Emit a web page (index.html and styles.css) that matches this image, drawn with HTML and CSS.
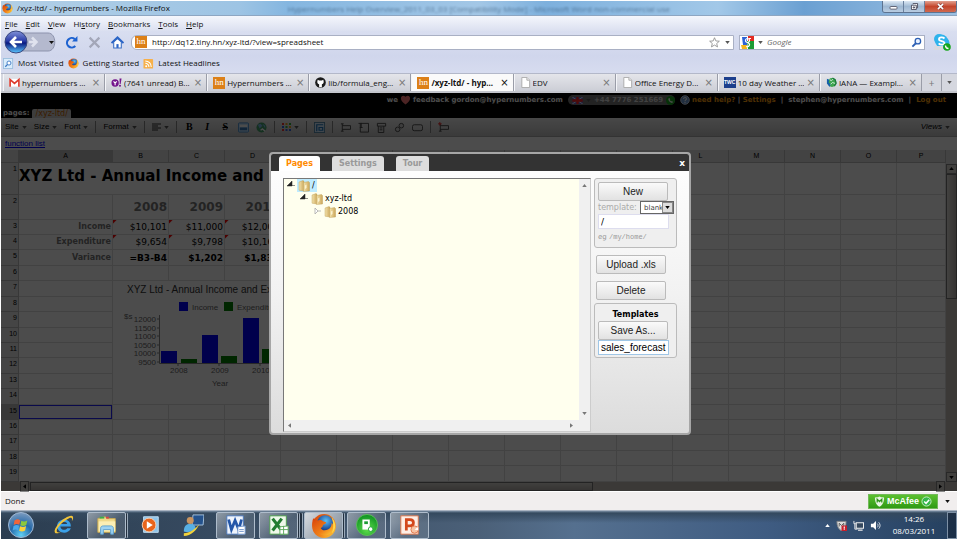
FILE: index.html
```html
<!DOCTYPE html>
<html lang="en">
<head>
<meta charset="utf-8">
<title>/xyz-ltd/ - hypernumbers</title>
<link rel="stylesheet" href="styles.css">
</head>
<body>
<svg class="defs" aria-hidden="true">
  <defs>
    <linearGradient id="gFolder" x1="0" x2="1"><stop offset="0" stop-color="#f3e3ae"/><stop offset="1" stop-color="#cda85a"/></linearGradient>
    <radialGradient id="gFox" cx=".55" cy=".35" r=".6"><stop offset="0" stop-color="#5cc0f5"/><stop offset="1" stop-color="#123a8c"/></radialGradient>
    <linearGradient id="gFlame" x1="0" y1="0" x2="1" y2="1"><stop offset="0" stop-color="#d8420a"/><stop offset=".6" stop-color="#f08018"/><stop offset="1" stop-color="#ffd23c"/></linearGradient>
    <radialGradient id="gOrb" cx=".5" cy=".9" r=".9"><stop offset="0" stop-color="#5fd0f5"/><stop offset=".5" stop-color="#2468a8"/><stop offset="1" stop-color="#7d9cc0"/></radialGradient>
    <radialGradient id="gGreen" cx=".5" cy=".7" r=".7"><stop offset="0" stop-color="#5fe04c"/><stop offset="1" stop-color="#0c8f22"/></radialGradient>
    <linearGradient id="gBack" x1="0" y1="0" x2="0" y2="1"><stop offset="0" stop-color="#8292d8"/><stop offset=".45" stop-color="#2a3ca8"/><stop offset=".55" stop-color="#0a1a80"/><stop offset="1" stop-color="#5cc8ff"/></linearGradient>
  </defs>
  <symbol id="firefox" viewBox="0 0 24 24">
    <circle cx="12" cy="12" r="11" fill="url(#gFlame)"/>
    <circle cx="13" cy="9.500" r="7.500" fill="url(#gFox)"/>
    <path d="M2 5c2 0 3 1 4 2 2-1 4-.5 5 .5l3 1c0 1.500-2 2-3 2.500 0 2-1 2-2 3 1 2 4 2.500 7 1 2-1 3-3 3-6 2 2 3 5 1 8-3 4-9 5-13 2C2 16 0 10 2 5z" fill="url(#gFlame)"/>
    <path d="M19 4c4 4 5 11 0 15 2-4 2-10 0-15z" fill="#ffd84a"/>
  </symbol>
  <symbol id="folder" viewBox="0 0 12 12">
    <path d="M1 2l4-1.500 1 .8V11l-5-.8z" fill="url(#gFolder)" stroke="#b9984e" stroke-width=".4"/>
    <path d="M5.500 2.500l5-1 1 1v8.500l-6 .5z" fill="url(#gFolder)" stroke="#b9984e" stroke-width=".4"/>
    <path d="M7 9V5.500l1.500-1V8z" fill="#fbf3d2"/>
  </symbol>
  <symbol id="sheet" viewBox="0 0 12 12"><path d="M2 .5h5.500l3 3v8H2z" fill="#fff" stroke="#a9a9a9"/><path d="M7.500.5v3h3" fill="#eee" stroke="#a9a9a9"/></symbol>
  <symbol id="down" viewBox="0 0 6 4"><path d="M0 0h6L3 4z"/></symbol>
  <symbol id="phone" viewBox="0 0 10 10"><circle cx="5" cy="5" r="5" fill="#17a51b"/><path d="M2.500 3l1.300-.8.9 1.500-.6.700 1.600 1.600.700-.5 1.300.9L7 7.800C4.500 7.500 2.500 5.300 2.500 3z" fill="#fff"/></symbol>
</svg>

<header class="chrome">
  <div class="titlebar">
    <svg class="i11"><use href="#firefox"/></svg>
    <span class="win-title">/xyz-ltd/ - hypernumbers - Mozilla Firefox</span>
    <span class="ghost">Hypernumbers Help Overview_2011_03_03 [Compatibility Mode] - Microsoft Word non-commercial use</span>
    <div class="winbtns">
      <button type="button" class="wb" aria-label="Minimise"><svg viewBox="0 0 10 8"><rect x="1" y="4" width="8" height="3" rx="1" fill="#fff" stroke="#556"/></svg></button>
      <button type="button" class="wb" aria-label="Restore"><svg viewBox="0 0 10 8"><path d="M3 .5h5.500v5H7M1.500 2.500H7v5H1.500zM3.500 4.500h1.500v1.200H3.500z" fill="#fff" stroke="#445"/></svg></button>
      <button type="button" class="wb wb-close" aria-label="Close window"><svg viewBox="0 0 10 8"><path d="M2 1l6 6M8 1L2 7" stroke="#733" stroke-width="3"/><path d="M2 1l6 6M8 1L2 7" stroke="#fff" stroke-width="1.800"/></svg></button>
    </div>
  </div>
  <nav class="menubar">
    <a href="#"><u>F</u>ile</a><a href="#"><u>E</u>dit</a><a href="#"><u>V</u>iew</a><a href="#">Hi<u>s</u>tory</a><a href="#"><u>B</u>ookmarks</a><a href="#"><u>T</u>ools</a><a href="#"><u>H</u>elp</a>
  </nav>
  <div class="navbar">
    <svg class="backfwd" viewBox="0 0 54 24" role="img" aria-label="Back and forward">
      <path d="M14 3h30c9 0 9 18 0 18H14z" fill="#b4b9ce" stroke="#8d93ad"/>
      <path d="M28 7.500l4.500 4.500-4.500 4.500M25 12h7" fill="none" stroke="#dfe2ee" stroke-width="2.500"/>
      <path d="M45 11h5l-2.500 3z" fill="#111"/>
      <circle cx="12" cy="12" r="11" fill="url(#gBack)" stroke="#37457f"/>
      <path d="M12 7l-5 5 5 5M7.500 12H18" fill="none" stroke="#fff" stroke-width="2.600"/>
    </svg>
    <button type="button" class="nb" aria-label="Reload"><svg viewBox="0 0 12 12"><path d="M9.500 9.200A4.400 4.400 0 1 1 9 2.800" fill="none" stroke="#1d62d0" stroke-width="2"/><path d="M6.500 5h5V0z" fill="#1d62d0"/></svg></button>
    <button type="button" class="nb" aria-label="Stop"><svg viewBox="0 0 12 12"><path d="M1.500 1.500l9 9M10.500 1.500l-9 9" stroke="#a3a7b8" stroke-width="2"/></svg></button>
    <button type="button" class="nb" aria-label="Home"><svg viewBox="0 0 12 12"><path d="M2.500 5.500V11h7V5.500L6 2.500z" fill="#fff" stroke="#3b6fc4"/><path d="M.5 6.500L6 1.200l5.500 5.300" fill="none" stroke="#2b65c6" stroke-width="1.600"/><path d="M5 7.500h2V11H5z" fill="#2b65c6"/></svg></button>
    <div class="urlbox">
      <span class="hn">hn</span>
      <input class="url" aria-label="Address" value="http://dq12.tiny.hn/xyz-ltd/?view=spreadsheet">
      <svg class="i11" viewBox="0 0 12 12"><path d="M6 .8l1.500 3.500 3.800.3-2.900 2.500.9 3.700L6 8.800l-3.300 2 .9-3.700L.7 4.600l3.800-.3z" fill="#fff" stroke="#8a8a8a" stroke-width=".9"/></svg>
      <svg class="dd"><use href="#down"/></svg>
    </div>
    <div class="searchbox">
      <svg class="i13" viewBox="0 0 13 13"><rect width="13" height="13" fill="#fff"/><path d="M7 0h6v5H7z" fill="#e22b22"/><path d="M6 5h7v8H7z" fill="#1c9a34"/><path d="M0 9h6v4H1z" fill="#f4b51c"/><path d="M1 1h5v8H2z" fill="#2b62d4"/><circle cx="6.500" cy="4.500" r="2" stroke="#fff" stroke-width="1.200" fill="none"/><path d="M8 2.500h2M7 6.500c3 2 1 5-2 4" stroke="#fff" stroke-width="1.200" fill="none"/></svg>
      <svg class="dd"><use href="#down"/></svg>
      <input class="search" aria-label="Search" placeholder="Google">
      <svg class="i11" viewBox="0 0 12 12"><circle cx="7.500" cy="4.500" r="3" fill="#e8f1ff" stroke="#2c5fb4" stroke-width="1.400"/><path d="M5.300 6.800L1.500 10.600" stroke="#2c5fb4" stroke-width="2"/></svg>
    </div>
    <svg class="skype" viewBox="0 0 18 18"><circle cx="6" cy="6" r="5" fill="#2fb3ec"/><circle cx="11" cy="10" r="5.500" fill="#2fb3ec"/><circle cx="8.500" cy="8" r="6.500" fill="#2fb3ec"/><path d="M11.500 5.500c-1.500-1.500-5.500-1.500-5.500.7 0 2.400 5.500 1.300 5.500 3.800 0 2.200-4.500 2-5.800.4" fill="none" stroke="#fff" stroke-width="1.800"/><path d="M1 13h9v4H1z" fill="#d7d9df"/><circle cx="14" cy="14" r="3.800" fill="#17a51b"/><path d="M12.500 12.500c0 2 1 3 3 3" fill="none" stroke="#fff" stroke-width="1.300"/></svg>
  </div>
  <div class="bookmarks">
    <svg class="i11" viewBox="0 0 12 12"><rect x=".5" y=".5" width="10" height="11" fill="#d9ecfb" stroke="#9cc0df"/><circle cx="6.500" cy="5.500" r="2.200" fill="#fff" stroke="#3b77c4"/><path d="M5 7l-2.500 2.500" stroke="#3b77c4" stroke-width="1.400"/></svg><a href="#">Most Visited</a>
    <svg class="i11"><use href="#firefox"/></svg><a href="#">Getting Started</a>
    <svg class="i11" viewBox="0 0 12 12"><rect x=".5" y="1" width="10.500" height="10.500" rx="1" fill="#f7b04a"/><circle cx="3.500" cy="9" r="1.100" fill="#fff"/><path d="M2.500 5.800a4 4 0 0 1 4 4M2.500 3.200a6.500 6.500 0 0 1 6.500 6.600" fill="none" stroke="#fff" stroke-width="1.200"/></svg><a href="#">Latest Headlines</a>
  </div>
  <div class="tabs">
    <div class="tab"><svg class="i11" viewBox="0 0 12 12"><rect x=".5" y="2" width="11" height="8.500" fill="#fff"/><path d="M1.200 10.500V2.800L6 7l4.800-4.200v7.700" fill="none" stroke="#dd3a2c" stroke-width="1.800"/></svg><a href="#">hypernumbers …</a><button type="button" aria-label="Close tab">×</button></div>
    <div class="tab"><svg class="i11" viewBox="0 0 12 12"><circle cx="4.500" cy="6.500" r="4" fill="#74148c"/><path d="M2.800 4.700l1.700 2 1.700-2M4.500 6.500v2.500" fill="none" stroke="#fff" stroke-width="1.200"/><path d="M9.300 1.500h2.200l-1 6h-1z" fill="#74148c"/><circle cx="9.800" cy="9.500" r="1.100" fill="#74148c"/></svg><a href="#">(7641 unread) B...</a><button type="button" aria-label="Close tab">×</button></div>
    <div class="tab"><span class="hn">hn</span><a href="#">Hypernumbers …</a><button type="button" aria-label="Close tab">×</button></div>
    <div class="tab"><svg class="i11" viewBox="0 0 12 12"><circle cx="6" cy="6" r="5.800" fill="#1b1b1b"/><path d="M3 3l1.500.8h3L9 3c1 2.500.5 4.500-1.500 4.800v3.400h-3V7.800C2.500 7.500 2 5.500 3 3z" fill="#fff"/></svg><a href="#">lib/formula_eng…</a><button type="button" aria-label="Close tab">×</button></div>
    <div class="tab active"><span class="hn">hn</span><a href="#">/xyz-ltd/ - hyp...</a><button type="button" aria-label="Close tab">×</button></div>
    <div class="tab"><svg class="i11"><use href="#sheet"/></svg><a href="#">EDV</a><button type="button" aria-label="Close tab">×</button></div>
    <div class="tab"><svg class="i11"><use href="#sheet"/></svg><a href="#">Office Energy D...</a><button type="button" aria-label="Close tab">×</button></div>
    <div class="tab"><span class="twc">TWC</span><a href="#">10 day Weather …</a><button type="button" aria-label="Close tab">×</button></div>
    <div class="tab"><svg class="i11" viewBox="0 0 12 12"><circle cx="6.500" cy="6" r="4.800" fill="#3fa650"/><path d="M1 2l2.500 1L3 6l2 2-1 3-3-4z" fill="#1560a8"/><path d="M4 3l2 1 2-2M5 8l2-2 3 1" stroke="#d5f0e0" fill="none"/><path d="M7 1l3 2 1 4-2 3" stroke="#1c7a3c" fill="none" stroke-width="1.400"/></svg><a href="#">IANA — Exampl…</a><button type="button" aria-label="Close tab">×</button></div>
    <button type="button" class="newtab" aria-label="New tab">+</button>
    <button type="button" class="alltabs" aria-label="List all tabs"><svg class="dd"><use href="#down"/></svg></button>
  </div>
</header>

<main class="page">
  <div class="sitebar">
    <div class="account">
      <span class="fb">we <svg class="heart" viewBox="0 0 12 11"><path d="M6 10.500C-3 4.500 2-2 6 2c4-4 9 2.500 0 8.500z" fill="#ff7a7a"/></svg> feedback gordon@hypernumbers.com</span>
      <span class="pill"><svg class="flag" viewBox="0 0 12 8"><path d="M0 0h12v8H0z" fill="#5a6ad0"/><path d="M0 0l12 8M12 0L0 8" stroke="#fff"/><path d="M6 0v8M0 4h12" stroke="#f22" stroke-width="2.600"/></svg><svg class="dd"><use href="#down"/></svg> +44 7776 251669 <svg class="i9"><use href="#phone"/></svg></span>
      <svg class="help" viewBox="0 0 12 12"><circle cx="6" cy="6" r="5.200" fill="#6d9ad4" stroke="#dfe8f5"/><path d="M4.300 4.800c0-2.400 3.600-2.200 3.400-.1C7.600 6 6 5.800 6 7.500M6 8.300v1.300" fill="none" stroke="#fff" stroke-width="1.300"/></svg>
      <span><a href="#">need help?</a> | <a href="#">Settings</a></span><span>|</span><span>stephen@hypernumbers.com</span><span>|</span><a href="#">Log out</a>
    </div>
    <div class="pagetabs">pages: <a href="#">/xyz-ltd/</a></div>
  </div>

  <div class="toolbar">
    <button type="button">Site <svg class="dd"><use href="#down"/></svg></button>
    <button type="button">Size <svg class="dd"><use href="#down"/></svg></button>
    <button type="button">Font <svg class="dd"><use href="#down"/></svg></button>
    <i class="sep"></i>
    <button type="button">Format <svg class="dd"><use href="#down"/></svg></button>
    <i class="sep"></i>
    <button type="button" aria-label="Align"><svg class="i9" viewBox="0 0 9 9"><path d="M0 1h9M0 3h6M0 5h9M0 7h6" stroke="#333"/></svg> <svg class="dd"><use href="#down"/></svg></button>
    <i class="sep"></i>
    <button type="button" class="fmt b">B</button>
    <button type="button" class="fmt it">I</button>
    <button type="button" class="fmt st">S</button>
    <button type="button" aria-label="Image"><svg class="i11" viewBox="0 0 12 12"><rect x=".5" y="1" width="11" height="10" rx="1" fill="#bfe0ff" stroke="#4a8fd0"/><path d="M2 3h8v2.500H2z" fill="#fff"/><path d="M2 6h8v3H2z" fill="#3a7ab8"/></svg></button>
    <button type="button" aria-label="Link"><svg class="i11" viewBox="0 0 12 12"><circle cx="6" cy="6" r="5.500" fill="#44a06a"/><path d="M2 3l3-1 2 2-3 3zM7 2l3 2v3z" fill="#7fb8ea"/><path d="M5 9l2-1.500 3 2.500" stroke="#fff" stroke-width="1.500" fill="none"/></svg></button>
    <i class="sep"></i>
    <button type="button" aria-label="Colours"><svg class="i9" viewBox="0 0 9 9"><path d="M0 1h2M0 7h2" stroke="#e33" stroke-width="2"/><path d="M3.500 1h2M7 4h2" stroke="#e9a21c" stroke-width="2"/><path d="M7 1h2M3.500 4h2" stroke="#2cae3c" stroke-width="2"/><path d="M0 4h2M3.500 7h2M7 7h2" stroke="#36d" stroke-width="2"/></svg> <svg class="dd"><use href="#down"/></svg></button>
    <i class="sep"></i>
    <button type="button" aria-label="Merge"><svg class="i11" viewBox="0 0 12 12"><rect x=".5" y=".5" width="11" height="11" fill="#d5ecff" stroke="#58a"/><path d="M3 10V3h7M5.500 6h4v3h-4z" fill="none" stroke="#27b" stroke-width="1.300"/></svg></button>
    <i class="sep"></i>
    <button type="button" aria-label="Text field"><svg class="i11" viewBox="0 0 12 12"><path d="M1 2h3M2.500 2v8M1 10h3M2.500 4h9v4h-9" fill="none" stroke="#444"/></svg></button>
    <button type="button" aria-label="Text area"><svg class="i11" viewBox="0 0 12 12"><path d="M.5 1.500h11v9.500h-9V1.500M3.500 1v5M2 6h3" fill="none" stroke="#444"/></svg></button>
    <button type="button" aria-label="List"><svg class="i11" viewBox="0 0 12 12"><path d="M1.500 1.500h9v3h-9zM2.500 4.500v7h6v-7M4 6.500h3M4 8.500h3" fill="none" stroke="#444"/></svg></button>
    <button type="button" aria-label="Radio"><svg class="i11" viewBox="0 0 12 12"><circle cx="8" cy="4" r="2.500" fill="#ccc" stroke="#444"/><circle cx="4" cy="8" r="2.500" fill="#ccc" stroke="#444"/></svg></button>
    <button type="button" aria-label="Button"><svg class="i11" viewBox="0 0 12 12"><rect x=".5" y="3" width="11" height="6.500" rx="2" fill="none" stroke="#444"/></svg></button>
    <i class="sep"></i>
    <button type="button" aria-label="Required field"><svg class="i11" viewBox="0 0 12 12"><path d="M2.500 2v8M1 10h3M2.500 4h9v4h-9" fill="none" stroke="#444"/><path d="M0 2h4M2 0v4" stroke="#e22"/></svg></button>
    <button type="button" class="views">Views <svg class="dd"><use href="#down"/></svg></button>
  </div>
  <div class="formula"><a href="#">function list</a></div>

  <div class="sheet">
    <table>
      <colgroup><col class="c0"><col class="cA"><col class="cN" span="14"><col></colgroup>
      <thead><tr><th></th><th class="sel">A</th><th>B</th><th>C</th><th>D</th><th>E</th><th>F</th><th>G</th><th>H</th><th>I</th><th>J</th><th>K</th><th>L</th><th>M</th><th>N</th><th>O</th><th>P</th></tr></thead>
      <tbody>
        <tr class="r1"><th>1</th><td class="big" colspan="5">XYZ Ltd - Annual Income and</td><td></td><td></td><td></td><td></td><td></td><td></td><td></td><td></td><td></td><td></td><td></td></tr>
        <tr class="r2"><th>2</th><td></td><td class="yr">2008</td><td class="yr">2009</td><td class="yr">2010</td><td></td><td></td><td></td><td></td><td></td><td></td><td></td><td></td><td></td><td></td><td></td><td></td></tr>
        <tr><th>3</th><td class="lab">Income</td><td class="num note">$10,101</td><td class="num note">$11,000</td><td class="num note">$12,000</td><td></td><td></td><td></td><td></td><td></td><td></td><td></td><td></td><td></td><td></td><td></td><td></td></tr>
        <tr><th>4</th><td class="lab">Expenditure</td><td class="num note">$9,654</td><td class="num note">$9,798</td><td class="num note">$10,167</td><td></td><td></td><td></td><td></td><td></td><td></td><td></td><td></td><td></td><td></td><td></td><td></td></tr>
        <tr><th>5</th><td class="lab">Variance</td><td class="num tot">=B3-B4</td><td class="num tot">$1,202</td><td class="num tot">$1,833</td><td></td><td></td><td></td><td></td><td></td><td></td><td></td><td></td><td></td><td></td><td></td><td></td></tr>
        <tr><th>6</th><td></td><td></td><td></td><td></td><td></td><td></td><td></td><td></td><td></td><td></td><td></td><td></td><td></td><td></td><td></td><td></td></tr>
        <tr><th>7</th><td></td>
          <td class="chart" colspan="5" rowspan="8">
            <svg class="plot" viewBox="0 0 280 118" role="img" aria-label="Income and expenditure by year">
              <text x="14" y="12" class="ct">XYZ Ltd - Annual Income and Expenditure</text>
              <path d="M66 21h9v9h-9zM48 70h16v12H48zM89 54h16v28H89zM130 37h16v45h-16z" fill="#00f"/>
              <path d="M111 21h9v9h-9zM68 78h16v4H68zM108 75h16v7h-16zM149 68h16v14h-16z" fill="#008000"/>
              <g class="cl"><text x="79" y="29">Income</text><text x="124" y="29">Expenditure</text><text x="11" y="38">$s</text>
              <text x="57" y="92">2008</text><text x="98" y="92">2009</text><text x="139" y="92">2010</text><text x="99" y="105">Year</text></g>
              <g class="cl end"><text x="43" y="41">12000</text><text x="43" y="50">11500</text><text x="43" y="58">11000</text><text x="43" y="67">10500</text><text x="43" y="75">10000</text><text x="43" y="84">9500</text></g>
              <path d="M46.500 34v48.500H260M44 38h2M44 47h2M44 55h2M44 64h2M44 72h2M44 81h2M65 82v3M106 82v3M147 82v3" fill="none" stroke="#888"/>
            </svg>
          </td><td></td><td></td><td></td><td></td><td></td><td></td><td></td><td></td><td></td><td></td></tr>
        <tr><th>8</th><td></td><td></td><td></td><td></td><td></td><td></td><td></td><td></td><td></td><td></td><td></td></tr>
        <tr><th>9</th><td></td><td></td><td></td><td></td><td></td><td></td><td></td><td></td><td></td><td></td><td></td></tr>
        <tr><th>10</th><td></td><td></td><td></td><td></td><td></td><td></td><td></td><td></td><td></td><td></td><td></td></tr>
        <tr><th>11</th><td></td><td></td><td></td><td></td><td></td><td></td><td></td><td></td><td></td><td></td><td></td></tr>
        <tr><th>12</th><td></td><td></td><td></td><td></td><td></td><td></td><td></td><td></td><td></td><td></td><td></td></tr>
        <tr><th>13</th><td></td><td></td><td></td><td></td><td></td><td></td><td></td><td></td><td></td><td></td><td></td></tr>
        <tr><th>14</th><td></td><td></td><td></td><td></td><td></td><td></td><td></td><td></td><td></td><td></td><td></td></tr>
        <tr><th class="sel">15</th><td class="cursor"></td><td></td><td></td><td></td><td></td><td></td><td></td><td></td><td></td><td></td><td></td><td></td><td></td><td></td><td></td><td></td></tr>
        <tr><th>16</th><td></td><td></td><td></td><td></td><td></td><td></td><td></td><td></td><td></td><td></td><td></td><td></td><td></td><td></td><td></td><td></td></tr>
        <tr><th>17</th><td></td><td></td><td></td><td></td><td></td><td></td><td></td><td></td><td></td><td></td><td></td><td></td><td></td><td></td><td></td><td></td></tr>
        <tr><th>18</th><td></td><td></td><td></td><td></td><td></td><td></td><td></td><td></td><td></td><td></td><td></td><td></td><td></td><td></td><td></td><td></td></tr>
        <tr><th>19</th><td></td><td></td><td></td><td></td><td></td><td></td><td></td><td></td><td></td><td></td><td></td><td></td><td></td><td></td><td></td><td></td></tr>
      </tbody>
    </table>
    <div class="vs"><span class="cap"></span><span class="arr up"><svg><use href="#down"/></svg></span><span class="thumb"></span><span class="rest"></span><span class="arr"><svg><use href="#down"/></svg></span></div>
    <div class="hs"><span class="arr left"><svg><use href="#down"/></svg></span><span class="thumb"></span><span class="rest"></span><span class="arr right"><svg><use href="#down"/></svg></span></div>
  </div>

  <div class="backdrop">
    <section class="dialog" role="dialog" aria-label="Pages">
      <div class="dhead">
        <a href="#" class="dtab on">Pages</a><a href="#" class="dtab">Settings</a><a href="#" class="dtab">Tour</a>
        <button type="button" class="dclose" aria-label="Close">x</button>
      </div>
      <div class="dbody">
        <div class="treebox">
          <ul class="tree">
            <li><svg class="tw" viewBox="0 0 8 8"><path d="M5 0v5H0zM4 4.500h4" fill="#222" stroke="#222" stroke-width=".5"/></svg><a href="#" class="hit"><svg class="i12"><use href="#folder"/></svg> /</a>
              <ul><li><svg class="tw" viewBox="0 0 8 8"><path d="M5 0v5H0zM4 4.500h4" fill="#222" stroke="#222" stroke-width=".5"/></svg><a href="#"><svg class="i12"><use href="#folder"/></svg> xyz-ltd</a>
                <ul><li><svg class="tw" viewBox="0 0 8 8"><path d="M2 1v6l3-3zM5 4h3" fill="#fff" stroke="#aaa" stroke-width=".8"/></svg><a href="#"><svg class="i12"><use href="#folder"/></svg> 2008</a></li></ul>
              </li></ul>
            </li>
          </ul>
          <div class="tvs"><svg class="up"><use href="#down"/></svg><svg><use href="#down"/></svg></div>
          <div class="ths"><svg class="left"><use href="#down"/></svg><svg class="right"><use href="#down"/></svg></div>
        </div>
        <aside class="side">
          <div class="group">
            <button type="button" class="btn">New</button>
            <div class="tpl"><label for="tpl">template:</label><span class="pick"><select id="tpl"><option>blank</option></select><svg class="dd"><use href="#down"/></svg></span></div>
            <input class="field" aria-label="Page path" value="/">
            <small>eg <code>/my/home/</code></small>
          </div>
          <button type="button" class="btn lone">Upload .xls</button>
          <button type="button" class="btn lone">Delete</button>
          <div class="group">
            <label class="gt" for="save">Templates</label>
            <button type="button" class="btn">Save As...</button>
            <input class="field focus" id="save" value="sales_forecast">
          </div>
        </aside>
      </div>
    </section>
  </div>
</main>

<footer class="status">
  <span class="done">Done</span>
  <button type="button" class="mcafee"><svg class="i11" viewBox="0 0 12 12"><path d="M1 1.500c3 0 4-.5 5-1 1 .5 2 1 5 1C11 7 9 10 6 11.700 3 10 1 7 1 1.500z" fill="#e8f5e2"/><path d="M3.500 7V3.500L6 6l2.500-2.500V7" fill="none" stroke="#2c9418" stroke-width="1.400"/></svg><b>McAfee</b><svg class="i11" viewBox="0 0 12 12"><circle cx="6" cy="6" r="5" fill="#35b84a" stroke="#cfeecb"/><path d="M3.500 6l2 2L9 4" fill="none" stroke="#fff" stroke-width="1.600"/></svg></button>
  <svg class="dd"><use href="#down"/></svg>
</footer>

<footer class="taskbar">
  <button type="button" class="ti start" aria-label="Start"><svg viewBox="0 0 26 26"><circle cx="13" cy="13" r="12.500" fill="url(#gOrb)" stroke="#9fb8d4"/><path d="M6.500 8.500c2-1.500 4-1.500 5.800-.3l-1 4.500c-2-1-3.800-1-5.600.3z" fill="#f0663a"/><path d="M13.300 8.700c2 1.200 4 1 6-.2l-1 4.500c-2 1.200-4 1.300-6 .2z" fill="#8cc83c"/><path d="M5.500 14c2-1.300 3.800-1.300 5.600-.3l-1 4.500c-1.800-1-3.600-1-5.400.2z" fill="#4aa8ea"/><path d="M12.100 14.200c2 1 4 1 6-.2l-1 4.500c-2 1.200-4 1.200-6 .2z" fill="#fbd03c"/></svg></button>
  <button type="button" class="ti" aria-label="Internet Explorer"><svg viewBox="0 0 24 24"><path d="M19.500 13.500H8c.3 4 5.500 5 7.500 2h4c-3 7.500-15 6-15-2.500 0-9 15-10 15 .5zM8 11h7.500c-.5-3.500-6.800-3.500-7.500 0z" fill="#3aa0e8"/><path d="M3 21C-2 19 10 3 20 2c3 0 2 4 .5 6 1-3 0-4.500-3-3.500C10 8 1 18 5 20c1 .3 3-.5 4-1-2 1.500-4 2.500-6 2z" fill="#f2c53a"/></svg></button>
  <button type="button" class="ti box stack" aria-label="Explorer"><svg viewBox="0 0 24 24"><path d="M2 5l8-2 2 2h9v15H2z" fill="#f0d98a" stroke="#c8a850"/><path d="M4 3h5v2H4z" fill="#3cae4a"/><path d="M11 3h3v2h-3z" fill="#d44"/><path d="M3 8h18v11H3z" fill="#fbeeb4"/><path d="M5 22v-6c0-2 1-3 3-3h8c2 0 3 1 3 3v6h-3v-5H8v5z" fill="#9cd2f2" stroke="#5aa0d0"/></svg></button>
  <button type="button" class="ti" aria-label="Media Player"><svg viewBox="0 0 24 24"><path d="M5 3h16v17H5z" fill="#8ec4ea" stroke="#c7e2f6"/><circle cx="11" cy="12" r="7.500" fill="#e8641c" stroke="#f9d2b4"/><path d="M8.500 8l6.500 4-6.500 4z" fill="#fff"/></svg></button>
  <button type="button" class="ti" aria-label="Remote"><svg viewBox="0 0 24 24"><path d="M12 1h12l-1 11H11z" fill="#24528c" stroke="#aac6e0"/><circle cx="9" cy="7" r="3.800" fill="#c89460"/><path d="M2 19c0-6 3-8 7-8s6 2 6 6c-4 3-9 3-13 2z" fill="#58b0e4"/><path d="M2 21c6 0 12-4 17-10-3 7-9 13-17 13z" fill="#f2d23a"/></svg></button>
  <button type="button" class="ti box" aria-label="Word"><svg viewBox="0 0 24 24"><path d="M2 2h18v20H2z" fill="#eef4fc" stroke="#4a78bc"/><path d="M4 6l3 11 4-10 4 10 3-11" fill="none" stroke="#2356a8" stroke-width="3"/><path d="M14 14l8-1v9h-8z" fill="#fff" stroke="#6a90c8"/><path d="M15.500 17h5M15.500 19h5" stroke="#6a90c8"/></svg></button>
  <button type="button" class="ti box stack3" aria-label="Excel"><svg viewBox="0 0 24 24"><path d="M2 2h18v20H2z" fill="#eef8ea" stroke="#4a9c4a"/><path d="M5 5l10 13M15 5L5 18" fill="none" stroke="#227c30" stroke-width="3.400"/><path d="M13 14l9-1v9h-9z" fill="#fff" stroke="#5aa85a"/><path d="M13 17h9M17 13v9" stroke="#5aa85a"/></svg></button>
  <button type="button" class="ti box stack lit" aria-label="Firefox"><svg class="fx"><use href="#firefox"/></svg></button>
  <button type="button" class="ti box" aria-label="Sage"><svg viewBox="0 0 24 24"><circle cx="12" cy="12" r="11.500" fill="url(#gGreen)" stroke="#5cbf58"/><path d="M7 6h8v11H7z" fill="#fff"/><path d="M9 8h4v3H9z" fill="#1c9c34"/><circle cx="16" cy="16.500" r="2.500" fill="#fff" stroke="#1c9c34"/></svg></button>
  <button type="button" class="ti box" aria-label="PowerPoint"><svg viewBox="0 0 24 24"><path d="M2 2h19v20H2z" fill="#fdeee6" stroke="#e0764a"/><path d="M8 18V6h4c5 0 5 7 0 7H8" fill="none" stroke="#d4481c" stroke-width="3"/><circle cx="17" cy="17" r="4" fill="#f7c3a4" stroke="#e0764a"/><path d="M17 17l4-3v4z" fill="#fff"/></svg></button>
  <div class="tray">
    <svg class="up"><use href="#down"/></svg>
    <svg class="i11" viewBox="0 0 12 12"><path d="M1 1.500h10C11 7 9 10 6 11.700 3 10 1 7 1 1.500z" fill="#ddd" stroke="#888"/><path d="M3.500 7V3.500L6 6l2.500-2.500V7" fill="none" stroke="#555"/><path d="M6 6h6v6H6z" fill="#c8202c"/><path d="M9 7v2.500M9 10v1" stroke="#fff" stroke-width="1.200"/></svg>
    <svg class="i11" viewBox="0 0 12 12"><path d="M3.500 3h8v6h-8zM5.500 11h5" fill="#35485e" stroke="#eee" stroke-width="1.200"/><path d="M1 1v3h2M2 4v6h3" fill="none" stroke="#eee"/></svg>
    <svg class="i11" viewBox="0 0 12 12"><path d="M1 4h2.500L6.500 1v10l-3-3H1z" fill="#fff"/><path d="M8 4c1 1 1 3 0 4M9.500 2.500c2 2 2 5 0 7" fill="none" stroke="#dfe6ee"/></svg>
    <div class="clock"><time>14:26</time><time>08/03/2011</time></div>
    <span class="peek"></span>
  </div>
</footer>
</body>
</html>
```

FILE: styles.css
```css
* { box-sizing: border-box; }
html { background: #fff; }
body {
  margin: 0;
  padding: 1px;
  min-height: 100vh;
  display: flex;
  flex-direction: column;
  font: 8px/12px "Open Sans", "Noto Sans", sans-serif;
  color: #111;
  overflow: hidden;
}
a { color: inherit; text-decoration: none; }
button, input, select { font: inherit; color: inherit; margin: 0; padding: 0; border: 0; background: none; min-width: 0; }
input:focus { outline: none; }
svg { display: block; flex: none; }
.defs { position: absolute; width: 0; height: 0; }
.i9 { width: 9px; height: 9px; }
.i11 { width: 11px; height: 11px; }
.i12 { width: 12px; height: 12px; }
.i13 { width: 13px; height: 13px; }
.dd { width: 5px; height: 3px; fill: #555; }
.up { transform: rotate(180deg); }
.left { transform: rotate(90deg); }
.right { transform: rotate(-90deg); }

/* Browser chrome */
.chrome { background: linear-gradient(#e3e8f5, #d0d6ec 60%, #dfe3f3); }
.titlebar {
  display: flex;
  align-items: center;
  gap: 4px;
  height: 15px;
  padding-left: 1px;
  background: linear-gradient(90deg, #b2cfe6 0, #9dc4e4 25%, #84b6e0 30%, #a3c7e6 50%, #7db0dd 57%, #a2c8e8 75%, #6ba0d2 84%, #9cc0e2 100%);
  position: relative;
  border-bottom: 1px solid #8da6c2;
}
.ghost { position: absolute; left: 30%; top: 2px; color: #2c4a68; opacity: .6; filter: blur(1px); white-space: nowrap; }
.winbtns { display: flex; margin: 0 0 2px auto; border: 1px solid #5d7390; border-top: 0; border-radius: 0 0 3px 3px; overflow: hidden; }
.wb { width: 21px; height: 11px; display: grid; place-items: center; background: linear-gradient(#dce8f4, #9fb8d2 50%, #b9cde2); border-right: 1px solid #6b819e; }
.wb svg { width: 9px; height: 7px; }
.wb-close { width: 31px; border: 0; background: linear-gradient(#e2a08f, #c4452c 50%, #d06a50); }
.menubar { display: flex; gap: 8px; height: 15px; padding: 1px 4px; line-height: 14px; background: linear-gradient(#f4f6fc, #dbe0f0); }
.navbar { display: flex; align-items: center; height: 22px; gap: 4px; padding: 0 6px 0 3px; }
.backfwd { width: 54px; height: 24px; }
.nb { width: 19px; height: 19px; display: grid; place-items: center; }
.nb svg { width: 13px; height: 13px; }
.urlbox, .searchbox { display: flex; align-items: center; height: 15px; background: #fff; border: 1px solid #a9b0c4; }
.urlbox { flex: 1 1 600px; gap: 5px; padding: 0 3px; border-radius: 6px 0 0 6px; }
.url { flex: 1; }
.searchbox { flex: 0 1 186px; gap: 4px; padding: 0 2px 0 1px; margin-left: 1px; }
.search { flex: 1; font-style: italic; }
.search::placeholder { color: #666; opacity: 1; }
.skype { width: 18px; height: 18px; margin-left: 4px; }
.hn { width: 12px; height: 12px; flex: none; background: #dc8018; color: #fff; font: 9px/11px "Liberation Serif", serif; text-align: center; }
.twc { width: 12px; height: 11px; flex: none; background: #1c3f8c; color: #fff; font: bold 5px/11px "Liberation Sans", sans-serif; text-align: center; }
.bookmarks { display: flex; align-items: center; gap: 4px; height: 20px; padding-left: 2px; }
.tabs { display: flex; height: 20px; padding-left: 2px; border-top: 1px solid #b3b8c9; border-bottom: 2px solid #c3c5cc; background: #d5d7df; }
.tab { flex: 1 1 0; min-width: 0; display: flex; align-items: center; gap: 2px; padding: 0 4px 0 5px; border-right: 1px solid #9a9da8; border-left: 1px solid #f4f5f9; background: linear-gradient(#e4e5ea, #ccced6); white-space: nowrap; }
.tab a { flex: 1; overflow: hidden; }
.tab button { color: #777; font: 10px/12px "DejaVu Sans", sans-serif; }
.tab.active { background: #fafafa; font-weight: bold; }
.tab.active button { color: #111; }
.newtab { width: 20px; color: #777; border-right: 1px solid #9a9da8; font-size: 10px; }
.alltabs { width: 15px; display: grid; place-items: center; }

/* Spreadsheet page */
.page { flex: 1; display: flex; flex-direction: column; position: relative; background: #fff; color: #000; }
.sitebar { background: #000; color: #fff; height: 25px; display: flex; flex-direction: column; justify-content: space-between; font: bold 7px/10px "DejaVu Sans", sans-serif; }
.sitebar a { color: #ffa010; }
.account { display: flex; justify-content: flex-end; align-items: center; gap: 5px; height: 14px; padding-right: 11px; white-space: nowrap; }
.fb, .pill { display: flex; align-items: center; gap: 2px; }
.pill { gap: 3px; padding-left: 4px; border-radius: 5px; background: #777; height: 10px; color: #ddd; }
.heart { width: 11px; height: 10px; }
.flag { width: 11px; height: 7px; }
.help { width: 10px; height: 10px; margin-right: -3px; }
.pagetabs { display: flex; gap: 3px; padding-left: 2px; line-height: 9px; }
.pagetabs a { background: #ccc; color: #c86400; padding: 0 3px; border-radius: 2px 2px 0 0; font-weight: normal; font-size: 8px; }
.toolbar { display: flex; align-items: center; gap: 7px; height: 19px; padding: 0 7px 0 4px; background: linear-gradient(#f0f0f0, #c4c4c4); border-bottom: 1px solid #aaa; font: 8px/12px "Liberation Sans", sans-serif; }
.toolbar button { display: flex; align-items: center; gap: 3px; }
.sep { width: 1px; height: 12px; background: #888; }
.fmt { font: bold 10px/12px "Liberation Serif", serif; width: 11px; justify-content: center; }
.toolbar .fmt { font: bold 10px/12px "Liberation Serif", serif; }
.toolbar .it { font-style: italic; }
.st { text-decoration: line-through; }
.toolbar .views { margin-left: auto; font-style: italic; }
.formula { height: 13px; padding-left: 4px; font: 8px/13px "Liberation Sans", sans-serif; color: #00f; }
.formula a { text-decoration: underline; }
.sheet { flex: 1; display: grid; grid-template: 1fr 9px / 1fr 11px; }
.sheet table { width: 100%; height: 100%; table-layout: fixed; border-collapse: separate; border-spacing: 0; }
.c0 { width: 18px; }
.cA { width: 94px; }
.cN { width: 56px; }
th, td { padding: 0; border: 0 solid #ddd; border-width: 0 1px 1px 0; line-height: 12px; white-space: nowrap; }
thead th { height: 13px; background: #e0e0e0; border-color: #bbb; font: 7px/12px "Liberation Sans", sans-serif; }
tbody tr { height: 15px; }
tbody th { background: #e6e6e6; border-color: #bbb; font: 7px/12px "Liberation Sans", sans-serif; vertical-align: top; text-align: right; padding-right: 1px; }
thead .sel, tbody .sel { background: #bbb; }
tbody .r1 { height: 31px; }
tbody .r2 { height: 24px; }
.big { font: bold 15px/20px "DejaVu Sans", sans-serif; padding-bottom: 4px; overflow: hidden; }
.yr { font: bold 12px/16px "DejaVu Sans", sans-serif; text-align: right; color: #777; padding-right: 1px; }
.lab { font: bold 8px/12px "DejaVu Sans", sans-serif; text-align: right; color: #777; padding-right: 1px; }
.num { font: 9px/12px "DejaVu Sans", sans-serif; text-align: right; padding-right: 1px; }
.tot { font-weight: bold; }
.note { background: linear-gradient(135deg, #f00 2px, transparent 3px); }
.chart { vertical-align: top; overflow: hidden; }
.plot { width: 280px; height: 118px; }
.ct { font: 10px "Liberation Sans", sans-serif; fill: #333; }
.cl { font: 8px "Liberation Sans", sans-serif; fill: #666; }
.end { text-anchor: end; }
.cursor { background: #f0f0ff; box-shadow: inset 0 0 0 1px #22f; }
.vs { display: flex; flex-direction: column; background: #c5c0ba; }
.cap { height: 14px; background: #e0e0e0; }
.arr { flex: none; width: 11px; height: 10px; display: grid; place-items: center; border: 1px solid #888; background: #d5d2ce; }
.arr svg { width: 5px; height: 3px; fill: #000; }
.vs .thumb { flex: 124; background: linear-gradient(90deg, #e0ddd8, #b0aba5); border: 1px solid #777; }
.vs .rest { flex: 174; }
.hs { grid-column: 1 / -1; display: flex; padding: 0 11px 0 18px; background: #c5c0ba; }
.hs .arr { height: 9px; }
.hs .thumb { flex: 564; background: linear-gradient(#d8d5d0, #b5b0aa); border: 1px solid #777; }
.hs .rest { flex: 344; background: #c5beb8; }

/* Modal */
.backdrop { position: absolute; inset: 0; padding: 3px 0 0 2px; background: rgba(0, 0, 0, .7); display: grid; place-items: center; }
.dialog { width: 422px; max-width: 100%; border: 2px solid #a6a6a6; border-radius: 4px; background: linear-gradient(#fdfdfd 20px, #f2f2f2 50%, #dcdcdc); font: 9px/12px "DejaVu Sans", sans-serif; overflow: hidden; }
.dhead { display: flex; align-items: flex-end; gap: 12px; height: 17px; padding: 0 4px 0 8px; background: #333; font-weight: bold; }
.dtab { font-size: 8px; line-height: 15px; padding: 0 7px; border-radius: 3px 3px 0 0; background: #ddd; color: #999; }
.dtab.on { background: #fff; color: #ff8a00; }
.dclose { margin-left: auto; align-self: center; color: #fff; }
.dbody { display: flex; gap: 3px; padding: 7px 12px 1px; }
.treebox { flex: 1; display: grid; grid-template: 1fr 11px / 1fr 11px; min-height: 254px; border: 1px solid #777; border-right-color: #ccc; border-bottom-color: #ccc; background: #ffe; }
.tree, .tree ul { list-style: none; margin: 0; padding: 0; font-size: 8px; }
.tree { padding-left: 3px; }
.tree ul { padding-left: 13px; }
.tw { width: 8px; height: 8px; float: left; margin-top: 2px; }
.tree li a { display: inline-flex; align-items: center; gap: 2px; height: 13px; vertical-align: top; padding: 0 2px 0 1px; margin-left: 2px; }
.hit { background: #beebff; }
.tvs, .ths { display: flex; justify-content: space-between; align-items: center; background: #f0f0f0; padding: 5px 3px; }
.tvs { flex-direction: column; }
.ths { grid-column: 1 / -1; padding: 3px 16px 3px 3px; }
.tvs svg, .ths svg { width: 5px; height: 3px; fill: #777; }
.side { width: 83px; display: flex; flex-direction: column; }
.group { border: 1px solid #bbb; border-radius: 3px; padding: 3px 3px 2px; display: flex; flex-direction: column; align-items: flex-start; background: #efefef; }
.btn { width: 70px; height: 19px; border: 1px solid #bbb; border-radius: 2px; background: linear-gradient(#fafafa, #e2e2e2); font: 10px/16px "Liberation Sans", sans-serif; color: #222; }
.lone { margin: 7px 0 0 2px; }
.lone + .group { margin-top: 3px; padding-top: 5px; }
.tpl { display: flex; align-items: center; width: 76px; justify-content: space-between; height: 13px; }
.tpl label { color: #aaa; font: 8px/12px "DejaVu Sans", sans-serif; }
.pick { position: relative; width: 34px; }
.pick select { appearance: none; width: 34px; height: 13px; border: 1px solid #666; background: #fff; font-size: 7px; padding-left: 3px; display: block; color: #444; border-radius: 0; }
.pick .dd { position: absolute; right: 1px; top: 1px; width: 11px; height: 11px; padding: 3px 2px; background: #ddd; border: 1px solid #888; fill: #000; }
.field { width: 71px; height: 15px; background: #fff; border: 1px solid #dde; padding-left: 2px; font: 9px/13px "DejaVu Sans", sans-serif; }
.focus { border-color: #9fc6e6; font: 10px/13px "Liberation Sans", sans-serif; }
small { font-size: 7px; line-height: 16px; color: #999; }
code { font: 7px "Liberation Mono", monospace; }
.gt { align-self: center; font-weight: bold; font-size: 8px; color: #000; }

/* Status bar */
.status { display: flex; align-items: center; gap: 7px; height: 20px; padding: 0 7px 0 4px; background: #f1eeee; border-top: 1px solid #fff; border-bottom: 1px solid #aab4c2; }
.status .dd { fill: #111; }
.done { margin-right: auto; }
.mcafee { display: flex; align-items: center; gap: 2px; width: 70px; height: 15px; justify-content: center; background: linear-gradient(#5cc030, #2f9a14); border: 1px solid #73b95a; color: #fff; font: 9px/12px "Liberation Sans", sans-serif; }

/* Taskbar */
.taskbar { display: flex; align-items: center; height: 28px; background: linear-gradient(#7b8ea3, #34495e 2px, transparent 12px), linear-gradient(90deg, #2b3d50, #3b4f66 30%, #4b6078 50%, #55708f 60%, #3f5c82 80%, #25405f); }
.ti { width: 39px; height: 27px; display: grid; place-items: center; margin-right: 4px; }
.ti svg { width: 22px; height: 22px; }
.start svg, .ti .fx { width: 26px; height: 26px; }
.box { border: 1px solid #aebccb; border-radius: 2px; background: linear-gradient(135deg, rgba(255, 255, 255, .45), rgba(255, 255, 255, .12) 60%); }
.stack { box-shadow: 2px 0 0 -1px #23303f, 3px 0 0 -1px #9aa9b9; }
.stack3 { box-shadow: 2px 0 0 -1px #23303f, 3px 0 0 -1px #9aa9b9, 5px 0 0 -1px #23303f, 6px 0 0 -1px #9aa9b9; margin-right: 6px; }
.lit { background: linear-gradient(135deg, rgba(255, 255, 255, .8), rgba(255, 255, 255, .3)); }
.tray { margin-left: auto; display: flex; align-items: center; gap: 6px; color: #fff; height: 100%; }
.tray .up { width: 5px; height: 3px; fill: #fff; }
.clock { display: flex; flex-direction: column; align-items: center; width: 54px; line-height: 12px; }
.peek { width: 10px; height: 27px; border: 1px solid #7d90a5; background: rgba(20, 35, 55, .6); }
```
